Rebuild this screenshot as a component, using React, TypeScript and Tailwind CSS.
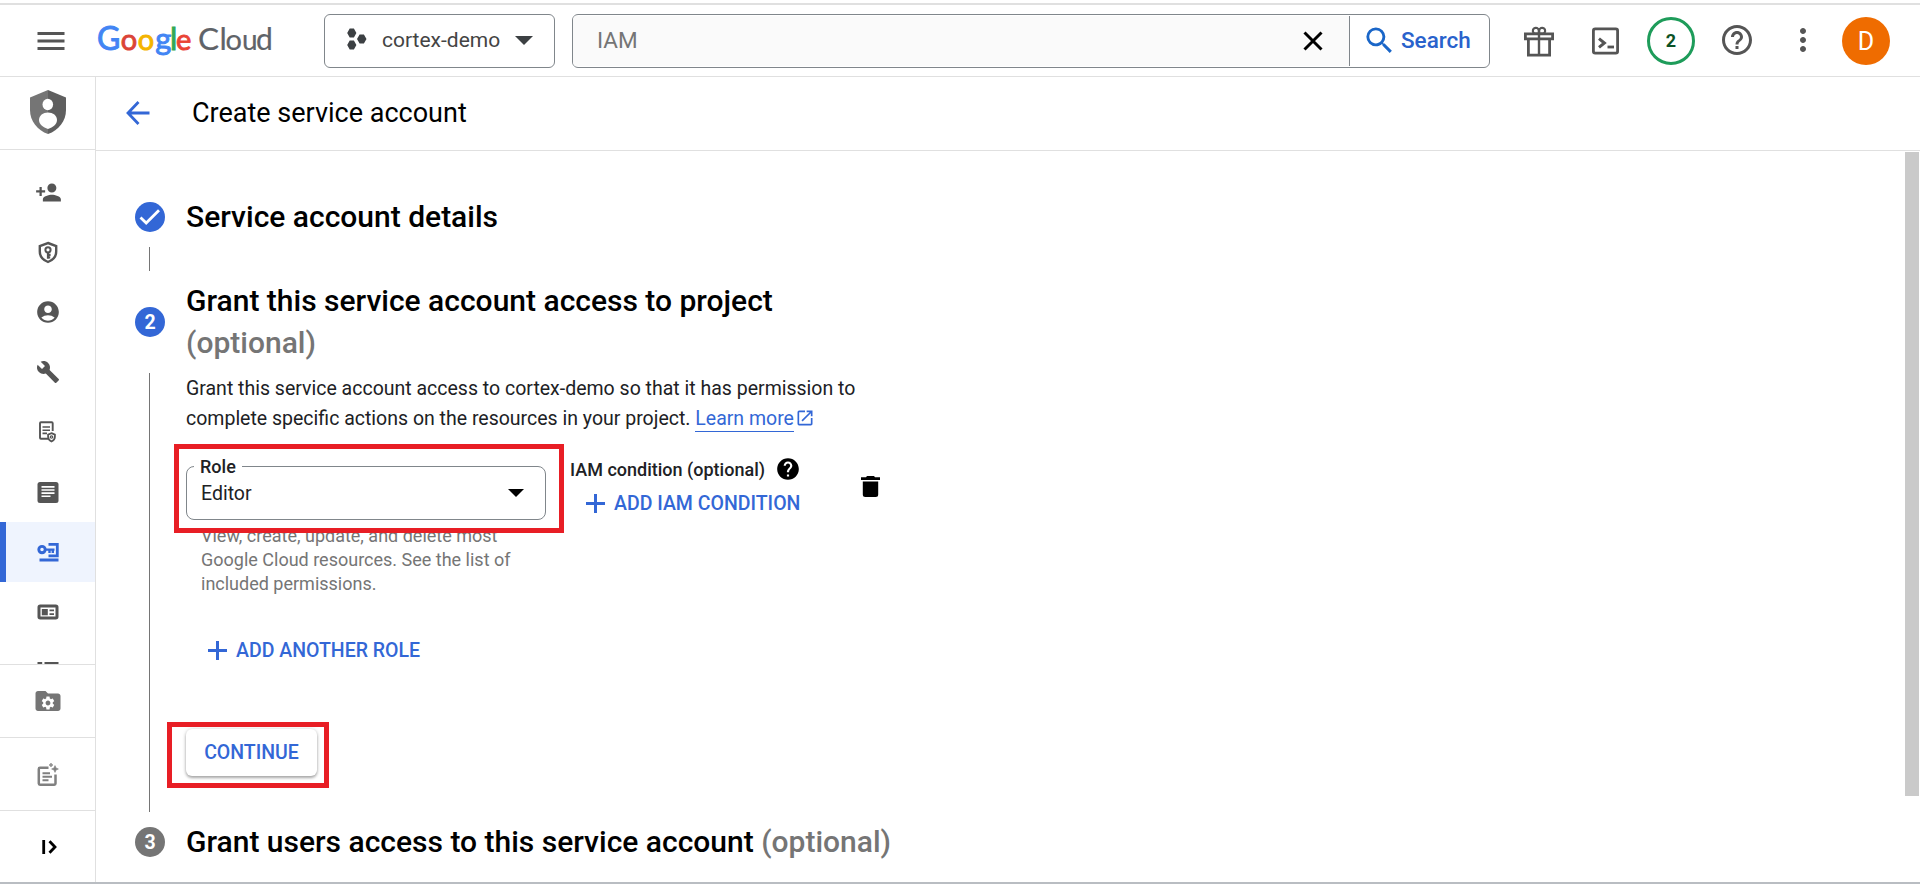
import type { ReactNode } from "react";
import {
  MdAccountCircle,
  MdBuild,
  MdFolder,
  MdHelp,
  MdHelpOutline,
  MdMenu,
  MdMoreVert,
  MdOpenInNew,
  MdPersonAdd,
  MdSearch,
  MdSettings,
} from "react-icons/md";

function Logo() {
  return (
    <svg width="180" height="54" viewBox="96 14 180 54" className="ml-[27px] shrink-0 font-[Lato]" fontSize="31">
      <g strokeWidth="0.9">
        <text x="97" y="50" fill="#4285f4" stroke="#4285f4" fontSize="32">G</text>
        <text x="120.8" y="50" fill="#db4437" stroke="#db4437" fontSize="29">o</text>
        <text x="137.8" y="50" fill="#f4b400" stroke="#f4b400" fontSize="29">o</text>
        <text x="155.2" y="50" fill="#4285f4" stroke="#4285f4">g</text>
        <text x="170" y="50" fill="#34a853" stroke="#34a853">l</text>
        <text x="176" y="50" fill="#ea4335" stroke="#ea4335" fontSize="29">e</text>
      </g>
      <g fill="#5f6368" stroke="#5f6368" strokeWidth="0.2">
        <text x="198" y="50" fontSize="31.5">C</text>
        <text x="219.4" y="50">l</text>
        <text x="225.6" y="50" fontSize="29">o</text>
        <text x="242" y="50" fontSize="28">u</text>
        <text x="256" y="50" fontSize="30">d</text>
      </g>
    </svg>
  );
}

function GiftIcon() {
  return (
    <svg width="36" height="36" viewBox="0 0 36 36" className="mb-0.5 ml-[31px] shrink-0" fill="none" stroke="#555" strokeWidth="2.8">
      <path d="M4.400 11.800h27.200v5H4.400zM7.400 16.800v16.400h21.200V16.800" />
      <path d="M18 11v22" strokeWidth="2.400" />
      <path d="M17.800 11.500h-4.300a3 3 0 1 1 4.300-3.200zM18.200 11.500h4.300a3 3 0 1 0-4.300-3.200z" strokeWidth="2.200" />
    </svg>
  );
}

function TerminalIcon() {
  return (
    <svg width="36" height="36" viewBox="0 0 36 36" className="ml-[30px] shrink-0" fill="none" stroke="#555">
      <rect x="6.400" y="5.900" width="24.200" height="24.200" rx="1.800" strokeWidth="2.800" />
      <path d="M12 15.600l5.400 4.400-5.400 4.400" strokeWidth="3" />
      <path d="M20.500 24h6.500" strokeWidth="2.800" />
    </svg>
  );
}

function Header() {
  return (
    <header className="flex h-[74px] items-center border-t-2 border-b border-[#e0e0e0] pl-[33px]">
      <MdMenu size={36} className="shrink-0 text-[#555]" />
      <Logo />
      <div className="ml-12 flex h-[54px] w-[231px] shrink-0 items-center rounded-md border border-[#80868b] pl-[22px]">
        <svg width="20" height="22" viewBox="0 0 20 22" className="-mt-[3px] shrink-0" fill="#3c4043">
          <path d="M2.700.5h4.200L9.400 5 6.900 9.500H2.700L.2 5zM12.600 6.400h4.300l2.600 4.600-2.600 4.600h-4.300L10 11zM2.700 12.500h4.200L9.400 17l-2.500 4.500H2.700L.2 17z" />
        </svg>
        <span className="ml-[15px] text-[21px] text-[#444]">cortex-demo</span>
        <svg width="18" height="9" viewBox="0 0 18 9" className="ml-[15px]" fill="#3c4043">
          <path d="M0 0h18L9 9z" />
        </svg>
      </div>
      <div className="ml-[17px] flex h-[54px] w-[918px] shrink-0 items-center overflow-hidden rounded-md border border-[#80868b]">
        <div className="mt-px flex h-[50px] w-[777px] items-center justify-between border-r border-[#80868b] bg-[#fafafa] pr-[26px] pl-6">
          <span className="-mt-px text-[22.5px] text-[#757575]">IAM</span>
          <svg width="20" height="20" viewBox="0 0 20 20" stroke="#000" strokeWidth="3">
            <path d="M1.500 1.500l17 17M18.500 1.500l-17 17" />
          </svg>
        </div>
        <MdSearch size={35} className="ml-3 text-[#1a66c8]" />
        <span className="ml-1 text-[22.5px] font-medium text-[#2962cc]">Search</span>
      </div>
      <GiftIcon />
      <TerminalIcon />
      <div className="ml-6 flex size-12 shrink-0 items-center justify-center rounded-full border-[3px] border-[#1e9c5a] text-lg font-bold text-[#0b5226]">2</div>
      <MdHelpOutline size={36} className="mb-px ml-6 shrink-0 text-[#555]" />
      <MdMoreVert size={36} className="mb-px ml-[30px] shrink-0 text-[#555]" />
      <div className="ml-[21px] flex size-12 shrink-0 items-center justify-center rounded-full bg-[#ef6c00] pt-0.5 text-[25px] text-white">D</div>
    </header>
  );
}

function Glyph({ children }: { children: ReactNode }) {
  return (
    <svg width="28" height="28" viewBox="0 0 28 28" fill="none" stroke="currentColor" strokeWidth="2">
      {children}
    </svg>
  );
}

function NavItem({ children, active = false }: { children: ReactNode; active?: boolean }) {
  return (
    <div
      className={
        active
          ? "flex h-[60px] shrink-0 items-center justify-center border-l-[6px] border-[#3367d6] bg-[#eff4fe] pr-[5px] text-[#3367d6]"
          : "flex h-[60px] shrink-0 items-center justify-center pl-px text-[#555]"
      }
    >
      {children}
    </div>
  );
}

function Sidebar() {
  return (
    <aside className="flex w-24 shrink-0 flex-col border-r border-[#e0e0e0]">
      <div className="flex h-[73px] shrink-0 items-center justify-center border-b border-[#e0e0e0] pl-px pb-0.5">
        <svg width="36" height="44" viewBox="0 0 36 44">
          <path d="M18 0L0 7.500V20c0 11 7.500 20.500 18 24z" fill="#757575" />
          <path d="M18 0l18 7.500V20c0 11-7.500 20.500-18 24z" fill="#5f5f5f" />
          <ellipse cx="17.800" cy="14.500" rx="5.300" ry="5.700" fill="#fff" />
          <path d="M18 22.500c5 0 9 3 9 7.500 0 4-4 7.500-9 9-5-1.500-9-5-9-9 0-4.500 4-7.500 9-7.500z" fill="#fff" />
        </svg>
      </div>
      <nav className="flex h-[514px] shrink-0 flex-col overflow-hidden pt-3">
        <NavItem>
          <MdPersonAdd size={27} />
        </NavItem>
        <NavItem>
          <Glyph>
            <path d="M14 5l8.200 3v5.500c0 5-3.400 8.700-8.200 10.500-4.800-1.800-8.200-5.500-8.200-10.500V8z" strokeWidth="2.400" />
            <circle cx="14" cy="11.800" r="2.600" />
            <path d="M14 14.500v6.300M14 16.800h2.600M14 19.400h2.200" strokeWidth="2.200" />
          </Glyph>
        </NavItem>
        <NavItem>
          <MdAccountCircle size={26} />
        </NavItem>
        <NavItem>
          <MdBuild size={24} />
        </NavItem>
        <NavItem>
          <Glyph>
            <path d="M14 20.800H7a1 1 0 0 1-1-1V5.200a1 1 0 0 1 1-1h10.700a1 1 0 0 1 1 1V13" strokeWidth="1.900" />
            <path d="M8.500 9h7.500M8.500 12.200h7.500M8.500 15.400h4.500" strokeWidth="1.600" />
            <path d="M17.500 15.200l3.400 1.400v2.200c0 2.200-1.400 3.900-3.400 4.700-2-.8-3.400-2.500-3.400-4.700v-2.200z" strokeWidth="1.800" />
            <circle cx="17.500" cy="19" r="1.200" strokeWidth="1.200" />
          </Glyph>
        </NavItem>
        <NavItem>
          <Glyph>
            <rect x="3.500" y="4" width="21" height="21" rx="2.500" fill="currentColor" stroke="none" />
            <path d="M7.500 8.900h13M7.500 12h13M7.500 15.100h13M7.500 18.200h9" stroke="#fff" strokeWidth="1.600" />
          </Glyph>
        </NavItem>
        <NavItem active>
          <Glyph>
            <path d="M14.500 6.300h8.800v11.500h-8.800" strokeWidth="2.800" />
            <circle cx="8" cy="11.600" r="3.200" strokeWidth="2.900" />
            <path d="M11 11.600h9.500M15.500 12v3M18.800 12v3" strokeWidth="2.400" />
            <path d="M5.500 22h19" strokeWidth="3" />
          </Glyph>
        </NavItem>
        <NavItem>
          <Glyph>
            <rect x="5" y="8" width="18" height="12" rx="1.200" strokeWidth="3" />
            <path d="M7.800 11h6v6.300h-6z" fill="currentColor" stroke="none" />
            <path d="M15.500 12.300h4.500M15.500 16.200h4.500" strokeWidth="1.800" />
          </Glyph>
        </NavItem>
        <NavItem>
          <Glyph>
            <path d="M3.500 5.200h4.700M10.500 5.200h14M3.500 14h4.700M10.500 14h14M3.500 22h4.700M10.500 22h14" strokeWidth="2.400" />
          </Glyph>
        </NavItem>
      </nav>
      <div className="flex h-[73px] shrink-0 items-center justify-center border-t border-[#e0e0e0] pl-px text-[#757575]">
        <div className="grid place-items-center *:[grid-area:1/1]">
          <MdFolder size={30} />
          <MdSettings size={16} className="mt-[3px] text-white" />
        </div>
      </div>
      <div className="flex h-[73px] shrink-0 items-center justify-center border-t border-[#e0e0e0] pl-px text-[#808080]">
        <Glyph>
          <path d="M14.500 7.800H6a1.200 1.200 0 0 0-1.200 1.200v14.500a1.200 1.200 0 0 0 1.200 1.200h14.300a1.200 1.200 0 0 0 1.200-1.200V14.500" strokeWidth="2.500" />
          <path d="M8.500 13.200h7.500M8.500 16.700h9.500M8.500 20.200h6" strokeWidth="2" />
          <path d="M21 5.600l1 2.400 2.400 1-2.400 1-1 2.400-1-2.400-2.400-1 2.400-1zM17 3l.6 1.400L19 5l-1.400.6L17 7l-.6-1.400L15 5l1.400-.6z" fill="currentColor" strokeWidth="0.600" />
        </Glyph>
      </div>
      <div className="flex flex-1 items-center justify-center border-t border-[#e0e0e0] pl-px text-black">
        <Glyph>
          <path d="M9.700 7v14M15.500 8.200l5.500 5.800-5.500 5.800" strokeWidth="2.800" />
        </Glyph>
      </div>
    </aside>
  );
}

function PlusIcon() {
  return (
    <svg width="19" height="19" viewBox="0 0 19 19" stroke="currentColor" strokeWidth="3" className="-translate-y-px">
      <path d="M9.500 0v19M0 9.500h19" />
    </svg>
  );
}

function Badge({ children, muted = false }: { children: ReactNode; muted?: boolean }) {
  return (
    <div
      className={
        muted
          ? "flex size-[30px] shrink-0 items-center justify-center rounded-full bg-[#757575] pt-0.5 text-[19.5px] font-bold text-white"
          : "flex size-[30px] shrink-0 items-center justify-center rounded-full bg-[#3367d6] pt-0.5 text-[19.5px] font-bold text-white"
      }
    >
      {children}
    </div>
  );
}

function RoleSelect() {
  return (
    <div className="mt-2 w-[360px] shrink-0">
      <div className="relative flex h-[54px] items-center justify-between rounded-lg border border-[#80868b] pr-[21px] pl-3.5">
        <span className="absolute -top-3 left-[7px] bg-white px-[6px] text-lg/6 font-medium text-[#202124]">Role</span>
        <span className="pt-0.5 text-[19.5px]/[30px] text-[#202124]">Editor</span>
        <svg width="16" height="8" viewBox="0 0 16 8">
          <path d="M0 0h16L8 8z" />
        </svg>
        <div className="absolute -top-[23px] -left-[13px] z-10 h-[89px] w-[390px] border-[5px] border-[#e81e25]" />
      </div>
      <p className="mt-1 pr-5 pl-[15px] text-lg/6 text-[#757575]">
        View, create, update, and delete most
        <br />
        Google Cloud resources. See the list of
        <br />
        included permissions.
      </p>
    </div>
  );
}

function GrantStep() {
  return (
    <div className="my-[9px] flex h-[439px]">
      <div className="ml-3.5 w-[37px] shrink-0 border-l border-[#757575]" />
      <div className="w-[720px] pt-px">
        <p className="text-[19.5px]/[30px] text-[#202124]">
          Grant this service account access to cortex-demo so that it has permission to
          <br />
          complete specific actions on the resources in your project.{" "}
          <a className="inline-block h-[28px] border-b border-[#3367d6] leading-[30px] text-[#3367d6]">Learn more</a>
          <MdOpenInNew size={20} className="ml-px inline-block -translate-y-0.5 text-[#3367d6]" />
        </p>
        <div className="mt-6 flex items-start">
          <RoleSelect />
          <div className="ml-6 w-[291px]">
            <div className="flex h-6 items-center text-lg/6 font-medium text-[#202124]">
              IAM condition (optional)
              <MdHelp size={26} className="-mt-3 ml-2.5 translate-y-[5px] text-black" />
            </div>
            <button className="mt-[7px] ml-4 flex h-[30px] items-center gap-[9px] text-[19.5px] font-medium text-[#3367d6]">
              <PlusIcon />
              ADD IAM CONDITION
            </button>
          </div>
          <svg width="19" height="21" viewBox="0 0 19 21" className="mt-[18px]">
            <path d="M6 0h7l1 1.300h5V4H0V1.300h5zM1.800 5.600h15.400V18.500a2.500 2.500 0 0 1-2.500 2.500H4.300a2.500 2.500 0 0 1-2.500-2.500z" />
          </svg>
        </div>
        <button className="mt-10 ml-[22px] flex h-[30px] items-center gap-[9px] text-[19.5px] font-medium text-[#3367d6]">
          <PlusIcon />
          ADD ANOTHER ROLE
        </button>
        <div className="relative mt-[63px] w-[131px]">
          <button className="h-[47px] w-full rounded-md bg-white pt-px text-[19.5px] font-medium text-[#3367d6] shadow-[0_2px_3px_rgba(0,0,0,0.3),0_0_4px_rgba(0,0,0,0.15)]">CONTINUE</button>
          <div className="absolute -top-[7px] -left-[19px] h-[66px] w-[162px] border-[5px] border-[#e81e25]" />
        </div>
      </div>
    </div>
  );
}

export default function App() {
  return (
    <div className="flex h-[884px] w-[1920px] flex-col overflow-hidden bg-white pt-[3px] font-[Roboto,sans-serif] text-black">
      <Header />
      <div className="flex h-[805px] shrink-0">
        <Sidebar />
        <div className="flex min-w-0 flex-1 flex-col">
          <div className="flex h-[74px] shrink-0 items-center border-b border-[#e0e0e0] pl-[30px]">
            <svg width="24" height="26" viewBox="0 0 24 26" fill="none" stroke="#3367d6" strokeWidth="2.800" className="-mt-0.5">
              <path d="M23.500 13H2M12.500 2L2 13l10.500 11" />
            </svg>
            <h1 className="ml-[42px] -mt-px text-[27px]">Create service account</h1>
          </div>
          <div className="flex flex-1 justify-between">
            <main className="pt-[45px] pl-[39px]">
              <div className="flex h-[42px] items-center gap-[21px]">
                <Badge>
                  <svg width="22" height="18" viewBox="0 0 22 18" fill="none" stroke="#fff" strokeWidth="2.800" className="-mt-0.5">
                    <path d="M1.500 9.500l5.700 5.500L20 2.200" />
                  </svg>
                </Badge>
                <h2 className="text-[30px]/[42px] font-medium">Service account details</h2>
              </div>
              <div className="my-[9px] ml-3.5 h-6 border-l border-[#757575]" />
              <div className="flex h-[84px] items-center gap-[21px]">
                <Badge>2</Badge>
                <h2 className="text-[30px]/[42px] font-medium">
                  Grant this service account access to project
                  <br />
                  <span className="text-[#757575]">(optional)</span>
                </h2>
              </div>
              <GrantStep />
              <div className="flex h-[42px] items-center gap-[21px]">
                <Badge muted>3</Badge>
                <h2 className="text-[30px]/[42px] font-medium">
                  Grant users access to this service account <span className="text-[#757575]">(optional)</span>
                </h2>
              </div>
            </main>
            <div className="mt-px mr-px h-[644px] w-3.5 bg-[#cacaca]" />
          </div>
        </div>
      </div>
      <div className="h-0.5 shrink-0 bg-[#b9bdc2]" />
    </div>
  );
}
